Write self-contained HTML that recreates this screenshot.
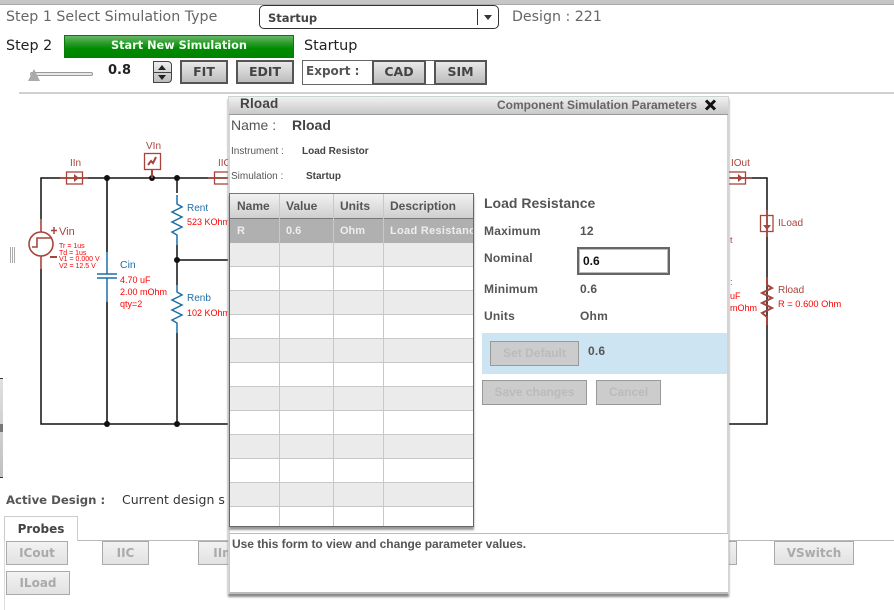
<!DOCTYPE html>
<html><head><meta charset="utf-8">
<style>
html,body{margin:0;padding:0;background:#fff}
#p{position:relative;width:894px;height:610px;overflow:hidden;background:#fff;font-family:"DejaVu Sans",sans-serif;color:#555}
#p div,#p span.a{position:absolute;box-sizing:border-box}
.t{white-space:nowrap;line-height:16px}
.ar{font-family:"Liberation Sans",sans-serif}
.b{background:linear-gradient(#e8e8e8,#bdbdbd);border:2px solid #555;font:bold 12px/20px "DejaVu Sans",sans-serif;color:#444;text-align:center}
.pb{background:linear-gradient(#f2f2f2,#e2e2e2);border:1px solid #aaa;font:bold 12px/22px "DejaVu Sans",sans-serif;color:#aaa;text-align:center;overflow:hidden}
.dis{background:#ccc;border:1px solid #999;font:bold 12px/23px "Liberation Sans",sans-serif;color:#bbb;text-align:center}
.l{font:bold 12px/16px "Liberation Sans",sans-serif;color:#555;white-space:nowrap;letter-spacing:.2px}
</style></head><body>
<div id="p">
<div style="left:0;top:0;width:894px;height:5px;background:#c6c6c6;border-bottom:1px solid #aaa"></div>
<div class="t" style="left:6px;top:9px;font-size:14.2px;color:#666">Step 1 Select Simulation Type</div>
<div style="left:259px;top:5px;width:240px;height:24px;border:1px solid #333;border-radius:5px;background:#fff"></div>
<div class="t" style="left:268px;top:10px;font-size:11.5px;font-weight:bold;color:#444">Startup</div>
<div style="left:477px;top:9px;width:1px;height:16px;background:#333"></div>
<div style="left:484px;top:15px;width:0;height:0;border:4px solid transparent;border-top:5px solid #333;border-bottom:0"></div>
<div class="t" style="left:512px;top:9px;font-size:14.2px;color:#666">Design : 221</div>
<div class="t" style="left:6px;top:38px;font-size:14.3px;color:#222">Step 2</div>
<div style="left:64px;top:35px;width:230px;height:23px;background:linear-gradient(#64b864 0%,#2a9a2a 35%,#008c00 60%,#008400);border:1px solid #0a7a0a"></div>
<div class="t" style="left:64px;top:38px;width:230px;text-align:center;font-size:11.3px;font-weight:bold;color:#f4fff4">Start New Simulation</div>
<div class="t" style="left:304px;top:38px;font-size:14.4px;color:#222">Startup</div>

<div style="left:30px;top:72px;width:63px;height:4px;background:#e8e8e8;border:1px solid #999;border-radius:2px"></div>
<div style="left:28px;top:69px;width:0;height:0;border-left:6px solid transparent;border-right:6px solid transparent;border-bottom:12px solid #aaa"></div>
<div class="t" style="left:108px;top:63px;font-size:13px;font-weight:bold;color:#222">0.8</div>
<div style="left:153px;top:61px;width:19px;height:22px;border:1px solid #444;border-radius:0 4px 4px 0;background:linear-gradient(#eee,#bbb)"></div>
<div style="left:153px;top:72px;width:19px;height:1px;background:#444"></div>
<div style="left:158px;top:65px;width:0;height:0;border:4px solid transparent;border-bottom:5px solid #222;border-top:0"></div>
<div style="left:158px;top:75px;width:0;height:0;border:4px solid transparent;border-top:5px solid #222;border-bottom:0"></div>
<div class="b" style="left:180px;top:60px;width:48px;height:24px;font-size:12.5px">FIT</div>
<div class="b" style="left:236px;top:60px;width:58px;height:24px;font-size:12.5px">EDIT</div>
<div style="left:302px;top:60px;width:185px;height:25px;border:1px solid #666"></div>
<div class="t" style="left:306px;top:63px;font-size:12px;font-weight:bold;color:#555">Export :</div>
<div class="b" style="left:372px;top:60px;width:54px;height:25px;font-size:12.5px">CAD</div>
<div class="b" style="left:434px;top:60px;width:53px;height:25px;font-size:12.5px">SIM</div>
<div style="left:19px;top:92px;width:875px;height:2px;background:#d0d0d0"></div>

<svg style="position:absolute;left:0;top:0" width="894" height="610">
<g fill="none" stroke="#111" stroke-width="1.5">
<path d="M41 219V178H228M730 178H767V424H41V269"/>
<path d="M177 178V193M177 245V285M177 333V424M177 260H228"/>
</g>
<path d="M107 178V252M107 302V424" stroke="#444" stroke-width="2" fill="none"/>
<g fill="none" stroke="#1f6fa8" stroke-width="1.5">
<path d="M107 252V274M107 278V302M97 274H117M97 278H117"/>
<path d="M177 195V204L182 207L172 212L182 217L172 222L182 227L172 232L177 235V245"/>
<path d="M177 285V292L182 295L172 300L182 305L172 310L182 315L172 320L177 323V333"/>
</g>
<g fill="#111"><circle cx="107" cy="178" r="3"/><circle cx="152" cy="178" r="3"/><circle cx="177" cy="178" r="3"/><circle cx="177" cy="260" r="3"/><circle cx="107" cy="424" r="3"/><circle cx="177" cy="424" r="3"/></g>
<g fill="none" stroke="#a9443c" stroke-width="1.3">
<circle cx="41" cy="244" r="12" stroke-width="1.6"/>
<path d="M41 219V232M41 256V269M32 247H37V238H52" stroke-width="1.6"/>
<rect x="66.500" y="172" width="16" height="12"/><path d="M60 178H88" stroke-width="1.500"/>
<rect x="144.500" y="153.500" width="16" height="16"/><path d="M152 170V178M148 165L151 161L153 163L156 157"  stroke-width="2"/>
<rect x="214.500" y="172" width="14" height="12"/><path d="M208 178H228" stroke-width="1.500"/>
<rect x="728" y="172" width="17.500" height="12"/><path d="M728 178H752" stroke-width="1.500"/>
<rect x="760.500" y="215.500" width="12.500" height="16"/><path d="M767 210V237" stroke-width="1.500"/>
<path d="M767 277V285L772 288L762 293L772 298L762 303L772 308L762 313L767 317V325" stroke-width="2"/>
</g>
<g fill="#a9443c"><path d="M74 174L79 178L74 182Z"/><path d="M738 174L743 178L738 182Z"/><path d="M763 225L767 230L771 225Z"/></g>
<path d="M51 230.500H57M54 227V234" stroke="#a9443c" stroke-width="1.500"/>
<path d="M50 257H57" stroke="#a9443c" stroke-width="2"/>
<g font-family="Liberation Sans,sans-serif" font-size="10">
<text x="70" y="166" fill="#a9443c">IIn</text>
<text x="146" y="149" fill="#a9443c">VIn</text>
<text x="218" y="166" fill="#a9443c">IIC</text>
<text x="731" y="166" fill="#a9443c">IOut</text>
<text x="778" y="226" fill="#a9443c">ILoad</text>
<text x="778" y="293" fill="#a9443c">Rload</text>
<text x="778" y="307" font-size="9.300" fill="#f00">R = 0.600 Ohm</text>
<text x="59" y="235" font-size="11" fill="#a9443c">Vin</text>
<g font-size="7" fill="#f00"><text x="59" y="248">Tr = 1us</text><text x="59" y="255">Td = 1us</text><text x="59" y="261">V1 = 0.000 V</text><text x="59" y="268">V2 = 12.5 V</text></g>
<text x="120" y="268" font-size="10.500" fill="#1f6fa8">Cin</text>
<g font-size="9" fill="#f00"><text x="120" y="283">4.70 uF</text><text x="120" y="295">2.00 mOhm</text><text x="120" y="307">qty=2</text></g>
<text x="187" y="211" font-size="10" fill="#1f6fa8">Rent</text>
<text x="187" y="225" font-size="9" fill="#f00">523 KOhm</text>
<text x="187" y="301" font-size="10" fill="#1f6fa8">Renb</text>
<text x="187" y="316" font-size="9" fill="#f00">102 KOhm</text>
<text x="730" y="243" font-size="9" fill="#a9443c">t</text>
<text x="730" y="285" font-size="9" fill="#1f6fa8">:</text>
<text x="730" y="299" font-size="9" fill="#f00">uF</text>
<text x="730" y="311" font-size="9" fill="#f00">mOhm</text>
</g>
<path d="M10.500 247V263M12.500 247V263M14.500 247V263" stroke="#aaa"/>
</svg>

<div style="left:0;top:378px;width:3px;height:100px;background:linear-gradient(#e0e0e0,#c0c0c0);border-top:1px solid #333;border-bottom:1px solid #333"></div>
<div style="left:0;top:424px;width:3px;height:8px;background:#777"></div>

<div class="t" style="left:6px;top:492px;font-size:11.700px;font-weight:bold;color:#555">Active Design :</div>
<div class="t" style="left:122px;top:492px;font-size:12.500px;color:#333">Current design s</div>
<div style="left:4px;top:540px;width:890px;height:1px;background:#bbb"></div>
<div style="left:4px;top:516px;width:74px;height:25px;border:1px solid #ccc;border-bottom:0;background:#fff;text-align:center;font:bold 12px/25px 'DejaVu Sans',sans-serif;color:#444">Probes</div>
<div style="left:4px;top:541px;width:1px;height:69px;background:#ddd"></div>
<div class="pb" style="left:6px;top:541px;width:62px;height:24px">ICout</div>
<div class="pb" style="left:102px;top:541px;width:47px;height:24px">IIC</div>
<div class="pb" style="left:198px;top:541px;width:48px;height:24px">IIn</div>
<div class="pb" style="left:700px;top:541px;width:37px;height:24px"></div>
<div class="pb" style="left:774px;top:541px;width:80px;height:24px">VSwitch</div>
<div class="pb" style="left:6px;top:571px;width:64px;height:24px">ILoad</div>

<!-- modal -->
<div style="left:228px;top:96px;width:501px;height:498px;background:#fff;border:2px solid #d4d4d4;border-top:1px solid #ccd4d0;border-bottom:0;box-shadow:0 3px 2px #8a8a8a"></div>
<div style="left:229px;top:97px;width:499px;height:18px;background:linear-gradient(#f0f0f0,#c8c8c8);border-bottom:1px solid #999"></div>
<div class="t ar" style="left:240px;top:96px;font-size:13.500px;font-weight:bold;color:#444;letter-spacing:.2px">Rload</div>
<div class="t ar" style="left:497px;top:97px;font-size:12px;font-weight:bold;color:#666">Component Simulation Parameters</div>
<svg style="position:absolute;left:704px;top:99px" width="13" height="12"><path d="M2 1.500L11 10.500M11 1.500L2 10.500" stroke="#111" stroke-width="3"/></svg>
<div class="t ar" style="left:231px;top:117px;font-size:14px;color:#555">Name :</div>
<div class="t ar" style="left:292px;top:117px;font-size:14px;font-weight:bold;color:#444">Rload</div>
<div class="t ar" style="left:231px;top:144px;font-size:10px;color:#555">Instrument :</div>
<div class="t ar" style="left:302px;top:144px;font-size:10px;font-weight:bold;color:#444">Load Resistor</div>
<div class="t ar" style="left:231px;top:169px;font-size:10px;color:#555">Simulation :</div>
<div class="t ar" style="left:306px;top:169px;font-size:10px;font-weight:bold;color:#444">Startup</div>

<!-- table -->
<div style="left:229px;top:193px;width:245px;height:334px;border:1px solid #666;border-top:1px solid #777;background:#fff;box-shadow:0 3px 2px #999;overflow:hidden">
<div style="left:0;top:0;width:243px;height:25px;background:linear-gradient(#f2f2f2,#cfcfcf);border-bottom:1px solid #777"></div>
<div style="left:0;top:25px;width:243px;height:24px;background:#b0b0b0"></div>
<div style="left:0;top:49px;width:243px;height:24px;background:#ebebeb;border-bottom:1px solid #c8c8c8"></div>
<div style="left:0;top:73px;width:243px;height:24px;border-bottom:1px solid #c8c8c8"></div>
<div style="left:0;top:97px;width:243px;height:24px;background:#ebebeb;border-bottom:1px solid #c8c8c8"></div>
<div style="left:0;top:121px;width:243px;height:24px;border-bottom:1px solid #c8c8c8"></div>
<div style="left:0;top:145px;width:243px;height:24px;background:#ebebeb;border-bottom:1px solid #c8c8c8"></div>
<div style="left:0;top:169px;width:243px;height:24px;border-bottom:1px solid #c8c8c8"></div>
<div style="left:0;top:193px;width:243px;height:24px;background:#ebebeb;border-bottom:1px solid #c8c8c8"></div>
<div style="left:0;top:217px;width:243px;height:24px;border-bottom:1px solid #c8c8c8"></div>
<div style="left:0;top:241px;width:243px;height:24px;background:#ebebeb;border-bottom:1px solid #c8c8c8"></div>
<div style="left:0;top:265px;width:243px;height:24px;border-bottom:1px solid #c8c8c8"></div>
<div style="left:0;top:289px;width:243px;height:24px;background:#ebebeb;border-bottom:1px solid #c8c8c8"></div>
<div style="left:49px;top:0;width:1px;height:334px;background:#c8c8c8"></div>
<div style="left:103px;top:0;width:1px;height:334px;background:#c8c8c8"></div>
<div style="left:153px;top:0;width:1px;height:334px;background:#c8c8c8"></div>
<div class="t ar" style="left:7px;top:4px;font-size:12px;font-weight:bold;color:#555">Name</div>
<div class="t ar" style="left:56px;top:4px;font-size:12px;font-weight:bold;color:#555">Value</div>
<div class="t ar" style="left:110px;top:4px;font-size:12px;font-weight:bold;color:#555">Units</div>
<div class="t ar" style="left:160px;top:4px;font-size:12px;font-weight:bold;color:#555">Description</div>
<div class="t ar" style="left:7px;top:29px;font-size:11px;font-weight:bold;color:#eee">R</div>
<div class="t ar" style="left:56px;top:29px;font-size:11px;font-weight:bold;color:#eee">0.6</div>
<div class="t ar" style="left:110px;top:29px;font-size:11px;font-weight:bold;color:#eee">Ohm</div>
<div class="t ar" style="left:160px;top:29px;width:83px;overflow:hidden;font-size:11px;font-weight:bold;color:#eee;letter-spacing:.3px">Load Resistance</div>
</div>

<!-- right panel -->
<div class="t ar" style="left:484px;top:195px;font-size:14px;font-weight:bold;color:#555">Load Resistance</div>
<div class="l" style="left:484px;top:223px">Maximum</div>
<div class="l" style="left:580px;top:223px">12</div>
<div class="l" style="left:484px;top:250px">Nominal</div>
<div style="left:577px;top:247px;width:93px;height:28px;border:2px solid #666;outline:1px solid #bbb;outline-offset:-3px;background:#fff;font:bold 12px/24px 'Liberation Sans',sans-serif;color:#111;padding-left:4px">0.6</div>
<div class="l" style="left:484px;top:281px">Minimum</div>
<div class="l" style="left:580px;top:281px">0.6</div>
<div class="l" style="left:484px;top:308px">Units</div>
<div class="l" style="left:580px;top:308px">Ohm</div>
<div style="left:482px;top:333px;width:245px;height:41px;background:#cde4f2"></div>
<div class="dis" style="left:490px;top:341px;width:89px;height:25px">Set Default</div>
<div class="l" style="left:588px;top:343px">0.6</div>
<div class="dis" style="left:482px;top:380px;width:105px;height:25px">Save changes</div>
<div class="dis" style="left:596px;top:380px;width:65px;height:25px">Cancel</div>

<!-- description -->
<div style="left:229px;top:533px;width:499px;height:61px;background:#fff;border-top:1px solid #bbb;border-left:1px solid #ccc;border-bottom:2px solid #bbb"></div>
<div class="t ar" style="left:232px;top:536px;font-size:12px;font-weight:bold;color:#555;letter-spacing:-.04px">Use this form to view and change parameter values.</div>
</div>
</body></html>
